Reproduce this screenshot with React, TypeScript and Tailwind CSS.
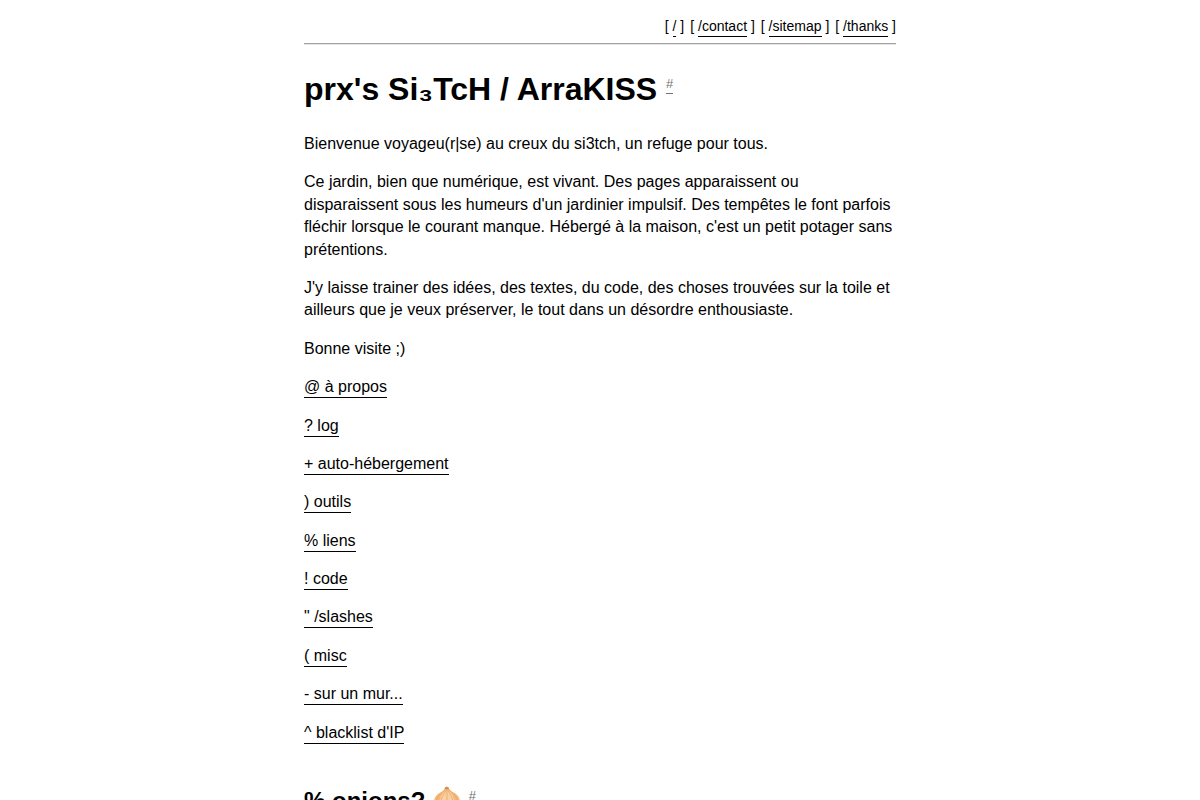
import type { ReactNode } from "react";

// ─────────────────────────────────────────────────────────────────────────────
// Content
// ─────────────────────────────────────────────────────────────────────────────

const navLinks = ["/", "/contact", "/sitemap", "/thanks"];

const menu: { href: string; label: string }[] = [
  { href: "/about",     label: "@ à propos"         },
  { href: "/log",       label: "? log"              },
  { href: "/ah",        label: "+ auto-hébergement" },
  { href: "/outils",    label: ") outils"           },
  { href: "/liens",     label: "% liens"            },
  { href: "/code",      label: "! code"             },
  { href: "/slashes",   label: "\" /slashes"        },
  { href: "/misc",      label: "( misc"             },
  { href: "/mur",       label: "- sur un mur..."    },
  { href: "/blacklist", label: "^ blacklist d'IP"   },
];

// ─────────────────────────────────────────────────────────────────────────────
// Small pieces
// ─────────────────────────────────────────────────────────────────────────────

function TextLink({ href, children }: { href: string; children: ReactNode }) {
  return (
    <a href={href} className="border-b border-black pb-0.5 hover:bg-black hover:text-white">
      {children}
    </a>
  );
}

function Anchor({ id }: { id: string }) {
  return (
    <a
      href={`#${id}`}
      className="border-b border-neutral-500 pb-0.5 align-super text-[13px] leading-none font-normal text-neutral-500"
    >
      #
    </a>
  );
}

function Onion() {
  return (
    <svg viewBox="0 0 28 28" className="mx-px inline-block h-7 w-7 align-[-5px]" role="img" aria-label="oignon">
      <path d="M12 1.500c.8-.9 2.800-.9 3.600 0 .4 2.200 2 3.200 4.600 4.700 4.300 2.200 6.800 5.300 6.800 9.800 0 6-5.500 9.500-13 9.500S1 22 1 16c0-4.500 2.500-7.600 6.800-9.800 2.600-1.500 4-2.500 4.200-4.700z" fill="#f5b87c" />
      <path d="M14 3c-4 3-7 7-7 13 0 4 2.500 8 7 9.500 4.500-1.500 7-5.500 7-9.500 0-6-3-10-7-13z" fill="#fad0a0" />
      <path d="M12.800 3C10 7 3.500 9 3.500 16.500c0 3 1.500 5.500 4 7M15.200 3c2.800 4 9.300 6 9.300 13.500 0 3-1.500 5.500-4 7M13.400 3C12 8 8 10 8 16.500c0 3.500 1.500 6.500 4 8.500M14.600 3C16 8 20 10 20 16.500c0 3.500-1.500 6.500-4 8.500M14 2v23" fill="none" stroke="#e6a05c" strokeWidth="0.7" />
      <path d="M12 1.500c.8-.9 2.800-.9 3.600 0l.3 1.500h-4.200z" fill="#cf8f5a" />
      <path d="M12 25.500l-1 1.500M14 25.500V28M16 25.500l1 1.500" stroke="#b9773b" strokeWidth="0.8" />
    </svg>
  );
}

// ─────────────────────────────────────────────────────────────────────────────
// Page
// ─────────────────────────────────────────────────────────────────────────────

export default function App() {
  return (
    <div className="mx-auto max-w-[624px] bg-white px-4 pt-4 font-['Liberation_Sans',Arial,sans-serif] text-base leading-[1.4] text-black">
      <header>
        <nav className="flex flex-wrap justify-end gap-x-1.5 text-[14px] leading-5">
          {navLinks.map((href) => (
            <span key={href}>
              [ <TextLink href={href}>{href}</TextLink> ]
            </span>
          ))}
        </nav>
        <hr className="mt-[7px] border-t border-b border-t-neutral-400 border-b-neutral-200" />
      </header>

      <main className="space-y-4">
        <h1 className="mt-[22px] mb-[21px] text-[32px] leading-[45px] font-bold">
          prx's Si₃TcH / ArraKISS <Anchor id="top" />
        </h1>

        <p>Bienvenue voyageu(r|se) au creux du si3tch, un refuge pour tous.</p>
        <p>
          Ce jardin, bien que numérique, est vivant. Des pages apparaissent ou
          disparaissent sous les humeurs d'un jardinier impulsif. Des tempêtes le
          font parfois fléchir lorsque le courant manque. Hébergé à la maison,
          c'est un petit potager sans prétentions.
        </p>
        <p>
          J'y laisse trainer des idées, des textes, du code, des choses trouvées
          sur la toile et ailleurs que je veux préserver, le tout dans un
          désordre enthousiaste.
        </p>
        <p>Bonne visite ;)</p>

        {menu.map(({ href, label }) => (
          <p key={href}>
            <TextLink href={href}>{label}</TextLink>
          </p>
        ))}

        <h2 className="mt-10 text-2xl leading-[34px] font-bold">
          % onions? <Onion /> <Anchor id="onions" />
        </h2>
      </main>
    </div>
  );
}
